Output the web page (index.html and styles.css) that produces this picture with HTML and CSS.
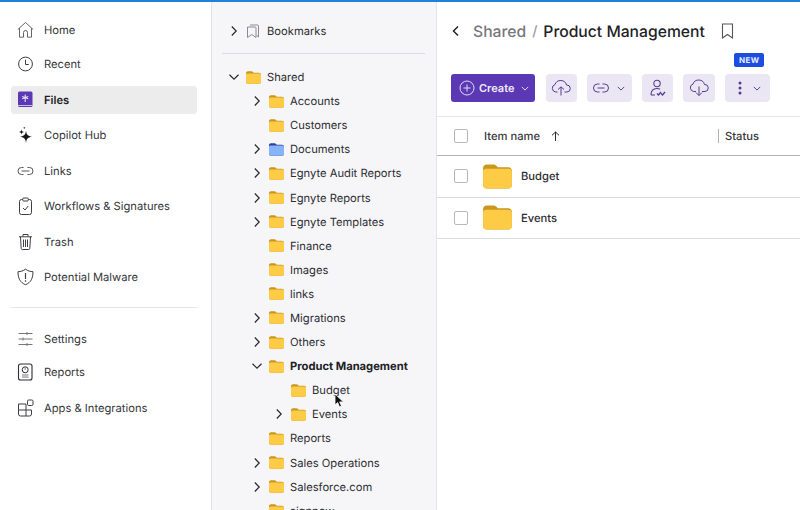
FILE: index.html
```html
<!DOCTYPE html>
<html lang="en">
<head>
  <meta charset="UTF-8">
  <title>Product Management</title>
  <link rel="stylesheet" href="styles.css">
</head>
<body>
  <svg class="defs" width="0" height="0">
    <symbol id="folder" viewBox="0 0 15 13">
      <path d="M0 2.200C0 1 .8.200 2 .200h3.400c.6 0 1 .2 1.400.6l.9.9h5.300c1.200 0 2 .8 2 2v7.100c0 1.200-.8 2-2 2H2c-1.200 0-2-.8-2-2z" fill="#c9971c"/>
      <path d="M0 4c0-1 .8-1.500 1.600-1.500h11.600c1 0 1.800.6 1.800 1.600v6.700c0 1.200-.8 2-2 2H2c-1.200 0-2-.8-2-2z" fill="#fdcb45"/>
    </symbol>
    <symbol id="folder-blue" viewBox="0 0 15 13">
      <path d="M0 2.200C0 1 .8.200 2 .200h3.400c.6 0 1 .2 1.400.6l.9.9h5.300c1.200 0 2 .8 2 2v7.100c0 1.200-.8 2-2 2H2c-1.200 0-2-.8-2-2z" fill="#2f3f9e"/>
      <path d="M0 4c0-1 .8-1.500 1.600-1.500h11.600c1 0 1.800.6 1.800 1.600v6.700c0 1.200-.8 2-2 2H2c-1.200 0-2-.8-2-2z" fill="#86b4f8"/>
    </symbol>
    <symbol id="chev-right" viewBox="0 0 10 12">
      <path d="M2.800 1.500 7.200 6l-4.400 4.500" fill="none" stroke="#2b2b2e" stroke-width="1.200"/>
    </symbol>
    <symbol id="chev-down" viewBox="0 0 12 10">
      <path d="M1.500 2.800 6 7.200l4.500-4.400" fill="none" stroke="#2b2b2e" stroke-width="1.200"/>
    </symbol>
    <symbol id="caret" viewBox="0 0 10 6">
      <path d="M1 1l4 4 4-4" fill="none" stroke="currentColor" stroke-width="1.200"/>
    </symbol>
  </svg>

  <div class="topline"></div>
  <div class="app">

    <!-- left nav -->
    <nav class="sidebar">
      <a class="nav-item first">
        <svg class="nav-icon" viewBox="0 0 18 18"><path d="M.8 8.500 8.500 1.500l7.700 7M2.500 7.200v9h4v-4.700a2 2 0 0 1 4 0v4.700h4v-9" fill="none" stroke="#55555c" stroke-width=".9"/></svg>
        Home
      </a>
      <a class="nav-item second">
        <svg class="nav-icon" viewBox="0 0 18 18"><circle cx="8.500" cy="9" r="6.900" fill="none" stroke="#3f3f45" stroke-width="1"/><path d="M8.500 4.800V9.500h3.300" fill="none" stroke="#3f3f45" stroke-width="1"/></svg>
        Recent
      </a>
      <a class="nav-item active">
        <svg class="nav-icon" viewBox="0 0 18 18"><rect x="1" y="0.500" width="14.500" height="15.500" rx="1.500" fill="#5b38b4"/><rect x="1" y="14" width="14.500" height="1" fill="#c9bdea"/><path d="M8.200 3.500v7.500M5.200 5.500l6 2.200M11.200 5.500l-6 2.200" stroke="#e6dff7" stroke-width="1.100"/></svg>
        Files
      </a>
      <a class="nav-item">
        <svg class="nav-icon" viewBox="0 0 18 18"><path d="M9 4.500c.5 4.200 1.800 5.600 6 6.200-4.200.6-5.500 2-6 6.300-.5-4.300-1.800-5.700-6-6.300 4.200-.6 5.500-2 6-6.200zM4.500 3.200c.2 2 .8 2.600 2.800 2.800-2 .2-2.600.8-2.800 2.800-.2-2-.8-2.600-2.800-2.800 2-.2 2.600-.8 2.800-2.800zM7.300.5c.1 1 .4 1.300 1.400 1.400-1 .1-1.300.4-1.400 1.400-.1-1-.4-1.300-1.400-1.400 1-.1 1.300-.4 1.400-1.400z" fill="#16161a"/></svg>
        Copilot Hub
      </a>
      <a class="nav-item">
        <svg class="nav-icon" viewBox="0 0 18 18"><path d="M6.500 5.500H4.500a3.500 3.500 0 0 0 0 7h2M10.500 5.500h2a3.500 3.500 0 0 1 0 7h-2M4.500 9h8" fill="none" stroke="#55555c" stroke-width="1"/></svg>
        Links
      </a>
      <a class="nav-item">
        <svg class="nav-icon" viewBox="0 0 18 18"><rect x="2.500" y="2.500" width="12" height="15" rx="2" fill="none" stroke="#3f3f45" stroke-width="1"/><rect x="5.700" y="1" width="5.600" height="3" rx="1" fill="#fff" stroke="#3f3f45" stroke-width="1"/><path d="m6 11 2 2 3.200-4" fill="none" stroke="#3f3f45" stroke-width="1"/></svg>
        Workflows &amp; Signatures
      </a>
      <a class="nav-item">
        <svg class="nav-icon" viewBox="0 0 18 18"><path d="M2 3.800h13M6 3.500V1.500h5v2M3.500 3.800l.7 11.700c0 .6.500 1 1 1h6.600c.5 0 1-.4 1-1l.7-11.700M6.500 6.500v7.500M8.500 6.500v7.500M10.500 6.500v7.500" fill="none" stroke="#3f3f45" stroke-width="1"/></svg>
        Trash
      </a>
      <a class="nav-item">
        <svg class="nav-icon" viewBox="0 0 18 18"><path d="M8.500 1.200c2.300 1.700 4.700 2.400 7.500 2.500 0 6.500-2 10.800-7.500 13C3 14.500 1 10.200 1 3.700c2.800-.1 5.200-.8 7.500-2.500z" fill="none" stroke="#3f3f45" stroke-width="1"/><path d="M8.500 5v6M8.500 12.300v1.400" stroke="#3f3f45" stroke-width="1.200"/></svg>
        Potential Malware
      </a>

      <div class="nav-divider"></div>

      <a class="nav-item settings">
        <svg class="nav-icon" viewBox="0 0 18 18"><path d="M1.500 3.500h14M1.500 9h14M1.500 14.500h14" stroke="#77777c" stroke-width="1"/><path d="M10 2v3M6 7.500v3M10 13v3" stroke="#77777c" stroke-width="1"/></svg>
        Settings
      </a>
      <a class="nav-item reports">
        <svg class="nav-icon" viewBox="0 0 18 18"><rect x="1.500" y="1" width="13.500" height="16" rx="2" fill="none" stroke="#2f2f34" stroke-width="1.100"/><circle cx="8.200" cy="6.800" r="3" fill="none" stroke="#2f2f34" stroke-width="1"/><path d="M8.200 6.800V4.300M5 12h6.500M5 14h6.500" stroke="#77777c" stroke-width="1"/></svg>
        Reports
      </a>
      <a class="nav-item apps">
        <svg class="nav-icon" viewBox="0 0 18 18"><path d="M1.500 5h7.500v12H3.500a2 2 0 0 1-2-2zM1.500 11h7.500M9 11h5.500v4a2 2 0 0 1-2 2H9" fill="none" stroke="#3f3f45" stroke-width="1"/><rect x="10.500" y="1" width="5.500" height="5.500" rx="1.200" fill="none" stroke="#3f3f45" stroke-width="1"/></svg>
        Apps &amp; Integrations
      </a>
    </nav>

    <!-- folder tree -->
    <aside class="tree">
      <div class="bookmarks">
        <svg class="chev"><use href="#chev-right"/></svg>
        <svg class="bm-icon" viewBox="0 0 14 14"><path d="M4 1h7.500c.6 0 1 .4 1 1v11l-2-1.600" fill="none" stroke="#8a8a90" stroke-width="1"/><path d="M1.500 3h7.500c.6 0 1 .4 1 1v9.500L5.800 10.500 1.500 13.500z" fill="none" stroke="#8a8a90" stroke-width="1"/></svg>
        <span>Bookmarks</span>
      </div>
      <div class="tree-divider"></div>
      <ul class="tree-list">
        <li class="row lvl0"><svg class="chev down"><use href="#chev-down"/></svg><svg class="fld"><use href="#folder"/></svg>Shared</li>
        <li class="row lvl1"><svg class="chev"><use href="#chev-right"/></svg><svg class="fld"><use href="#folder"/></svg>Accounts</li>
        <li class="row lvl1"><span class="chev"></span><svg class="fld"><use href="#folder"/></svg>Customers</li>
        <li class="row lvl1"><svg class="chev"><use href="#chev-right"/></svg><svg class="fld"><use href="#folder-blue"/></svg>Documents</li>
        <li class="row lvl1"><svg class="chev"><use href="#chev-right"/></svg><svg class="fld"><use href="#folder"/></svg>Egnyte Audit Reports</li>
        <li class="row lvl1"><svg class="chev"><use href="#chev-right"/></svg><svg class="fld"><use href="#folder"/></svg>Egnyte Reports</li>
        <li class="row lvl1"><svg class="chev"><use href="#chev-right"/></svg><svg class="fld"><use href="#folder"/></svg>Egnyte Templates</li>
        <li class="row lvl1"><span class="chev"></span><svg class="fld"><use href="#folder"/></svg>Finance</li>
        <li class="row lvl1"><span class="chev"></span><svg class="fld"><use href="#folder"/></svg>Images</li>
        <li class="row lvl1"><span class="chev"></span><svg class="fld"><use href="#folder"/></svg>links</li>
        <li class="row lvl1"><svg class="chev"><use href="#chev-right"/></svg><svg class="fld"><use href="#folder"/></svg>Migrations</li>
        <li class="row lvl1"><svg class="chev"><use href="#chev-right"/></svg><svg class="fld"><use href="#folder"/></svg>Others</li>
        <li class="row lvl1 current"><svg class="chev down"><use href="#chev-down"/></svg><svg class="fld"><use href="#folder"/></svg>Product Management</li>
        <li class="row lvl2"><span class="chev"></span><svg class="fld"><use href="#folder"/></svg>Budget</li>
        <li class="row lvl2"><svg class="chev"><use href="#chev-right"/></svg><svg class="fld"><use href="#folder"/></svg>Events</li>
        <li class="row lvl1"><span class="chev"></span><svg class="fld"><use href="#folder"/></svg>Reports</li>
        <li class="row lvl1"><svg class="chev"><use href="#chev-right"/></svg><svg class="fld"><use href="#folder"/></svg>Sales Operations</li>
        <li class="row lvl1"><svg class="chev"><use href="#chev-right"/></svg><svg class="fld"><use href="#folder"/></svg>Salesforce.com</li>
        <li class="row lvl1"><span class="chev"></span><svg class="fld"><use href="#folder"/></svg>signnow</li>
      </ul>
    </aside>

    <!-- main -->
    <main class="main">
      <div class="crumbs">
        <svg class="back" viewBox="0 0 10 12"><path d="M7 1.500 2.500 6 7 10.500" fill="none" stroke="#222" stroke-width="1.500"/></svg>
        <span class="crumb-parent">Shared</span>
        <span class="crumb-sep">/</span>
        <span class="crumb-current">Product Management</span>
        <svg class="bookmark" viewBox="0 0 13 16"><path d="M1.500 1h10v14L6.500 11.500 1.500 15z" fill="none" stroke="#55555c" stroke-width="1.100"/></svg>
      </div>

      <div class="toolbar">
        <button class="btn-create">
          <svg width="16" height="16" viewBox="0 0 16 16"><circle cx="8" cy="8" r="7" fill="none" stroke="#e4dcf6" stroke-width="1"/><path d="M8 4.500v7M4.500 8h7" stroke="#e4dcf6" stroke-width="1"/></svg>
          Create
          <svg class="caret" width="8" height="5"><use href="#caret"/></svg>
        </button>
        <button class="btn-tool">
          <svg width="20" height="16" viewBox="0 0 20 16"><path d="M6.500 12H4.800A3.800 3.800 0 0 1 4 4.600 6 6 0 0 1 15.500 5a3.500 3.500 0 0 1 .5 7h-2.500" fill="none" stroke="#4f3f8f" stroke-width="1"/><path d="M10 15.500V7M7 9.500 10 6.800l3 2.700" fill="none" stroke="#4f3f8f" stroke-width="1"/></svg>
        </button>
        <button class="btn-tool wide">
          <svg width="16" height="10" viewBox="0 0 16 10"><path d="M6.500 1H4.500a4 4 0 0 0 0 8h2M9.500 1h2a4 4 0 0 1 0 8h-2M4.500 5h7" fill="none" stroke="#4f3f8f" stroke-width="1"/></svg>
          <svg class="caret" width="8" height="5"><use href="#caret"/></svg>
        </button>
        <button class="btn-tool">
          <svg width="16" height="18" viewBox="0 0 16 18"><circle cx="7" cy="4.500" r="3.200" fill="none" stroke="#4f3f8f" stroke-width="1.100"/><path d="M1 16c0-4 2-6.500 6-6.500 1.300 0 2.300.2 3 .7M1 16h4" fill="none" stroke="#4f3f8f" stroke-width="1.100"/><path d="m7 14.500 1.500 1.500 2.500-3M11 14.500l1.500 1.500 2.500-3" fill="none" stroke="#4f3f8f" stroke-width="1.400"/></svg>
        </button>
        <button class="btn-tool cloud">
          <svg width="20" height="18" viewBox="0 0 20 18"><path d="M7 12.500H4.800A3.800 3.800 0 0 1 4 5.100 6 6 0 0 1 15.500 5.500a3.500 3.500 0 0 1 .5 7h-3" fill="none" stroke="#4f3f8f" stroke-width="1"/><path d="M10 7.500V16.500M7 13.500l3 3 3-3" fill="none" stroke="#4f3f8f" stroke-width="1"/></svg>
        </button>
        <div class="more-wrap">
          <span class="badge">NEW</span>
          <button class="btn-tool more">
            <svg width="4" height="14" viewBox="0 0 4 14"><circle cx="2" cy="2" r="1.500" fill="#4f3f8f"/><circle cx="2" cy="7" r="1.500" fill="#4f3f8f"/><circle cx="2" cy="12" r="1.500" fill="#4f3f8f"/></svg>
            <svg class="caret" width="8" height="5"><use href="#caret"/></svg>
          </button>
        </div>
      </div>

      <div class="list-head">
        <span class="check"></span>
        <span class="col-name">Item name</span>
        <svg class="sort" width="9" height="10" viewBox="0 0 9 10"><path d="M4.500 10V1M1 4.300 4.500 1 8 4.300" fill="none" stroke="#2b2b2e" stroke-width="1"/></svg>
        <span class="col-status">Status</span>
      </div>
      <div class="list-row">
        <span class="check"></span>
        <svg class="row-folder"><use href="#folder"/></svg>
        <span>Budget</span>
      </div>
      <div class="list-row">
        <span class="check"></span>
        <svg class="row-folder"><use href="#folder"/></svg>
        <span>Events</span>
      </div>
    </main>
  </div>

  <!-- mouse pointer -->
  <svg class="cursor" width="12" height="16" viewBox="0 0 12 16"><path d="M1 1v11l2.700-2.400 1.800 4.400 2-.9-1.800-4.200H9.500z" fill="#111" stroke="#fff" stroke-width=".8"/></svg>
</body>
</html>
```

FILE: styles.css
```css
* { box-sizing: border-box; }
html, body { margin: 0; height: 100%; overflow: hidden; }
body { font-family: Inter, "Liberation Sans", sans-serif; font-size: 11.2px; color: #2e2e33; background: #fff; text-rendering: geometricPrecision; }
.defs { position: absolute; }

.topline { height: 2px; background: #1f80e0; }
.app { display: flex; height: 508px; }

/* left nav */
.sidebar { width: 212px; flex: none; padding: 14px 14px 0 11px; border-right: 1px solid #e2e2e6; }
.nav-item { display: flex; align-items: center; gap: 9px; height: 28px; padding-left: 6px; margin-top: 7.5px; border-radius: 3px; color: #37373c; }
.nav-item.first { margin-top: 0; }
.nav-item.second { margin-top: 6px; }
.nav-item.active { background: #ececec; font-weight: 600; color: #1f1f23; }
.nav-icon { width: 18px; height: 18px; flex: none; }
.nav-divider { height: 1px; background: #e4e4e6; margin: 16px 0 17px; }
.nav-item.settings { margin-top: 0; }
.nav-item.reports { margin-top: 5px; }
.nav-item.apps { margin-top: 8px; }

/* tree */
.tree { width: 225px; flex: none; background: #f6f6f9; border-right: 1px solid #e4e4e8; overflow: hidden; padding-top: 17px; }
.bookmarks { display: flex; align-items: center; height: 24px; padding-left: 17px; }
.bm-icon { width: 14px; height: 14px; margin: 0 7px 0 7px; }
.tree-divider { height: 1px; background: #dcdce0; margin: 10px 11px 11px 10px; }
.tree-list { list-style: none; margin: 0; padding: 0; }
.row { display: flex; align-items: center; height: 24.1px; white-space: nowrap; }
.lvl0 { padding-left: 17px; }
.lvl1 { padding-left: 40px; }
.lvl2 { padding-left: 62px; }
.current { font-weight: 700; color: #222226; }
.chev { width: 10px; height: 12px; flex: none; display: block; }
.chev.down { width: 12px; height: 10px; margin-left: -1px; margin-right: -1px; }
.fld { width: 15px; height: 13px; flex: none; margin: 0 6px 0 7px; }

/* main */
.main { flex: 1; min-width: 0; overflow: hidden; }
.crumbs { display: flex; align-items: center; height: 38px; margin-top: 10px; padding-left: 14px; font-size: 15.7px; font-weight: 500; }
.back { width: 10px; height: 12px; margin-right: 12px; }
.crumb-parent { color: #77777c; }
.crumb-sep { color: #9a9a9f; margin: 0 6px 0 6px; font-size: 14px; }
.crumb-current { color: #222226; }
.bookmark { width: 13px; height: 16px; margin-left: 16px; }

.toolbar { display: flex; gap: 10.3px; margin: 24px 0 0 14px; height: 28px; }
button { font-family: inherit; text-rendering: inherit; border: 0; padding: 0; }
.btn-create { display: flex; align-items: center; width: 84.3px; height: 28px; padding-left: 8px; gap: 4px; background: #5b38b4; border-radius: 3px; color: #f0ebfb; font-size: 11px; font-weight: 600; }
.btn-create .caret { margin-left: 3px; color: #e4dcf6; }
.btn-tool { display: flex; align-items: center; justify-content: center; gap: 8px; width: 31px; height: 28px; background: #ebe6f4; border-radius: 4px; color: #4f3f8f; }
.btn-tool.wide { width: 45px; }
.btn-tool.cloud { width: 31.5px; }
.btn-tool.more { width: 45px; gap: 11px; padding-left: 3px; }
.more-wrap { position: relative; }
.badge { position: absolute; left: 9px; top: -21px; width: 30px; height: 14px; border-radius: 2px; background: #1d4ee0; color: #e8edff; font-size: 8px; font-weight: 700; letter-spacing: .4px; line-height: 14px; text-align: center; }

.list-head { display: flex; align-items: center; height: 40px; margin-top: 14px; border-top: 1px solid #e6e6e8; border-bottom: 1px solid #b4b4b8; padding-left: 17px; font-weight: 500; color: #37373c; }
.check { width: 14px; height: 14px; flex: none; border: 1px solid #b9b9bd; border-radius: 2px; background: #fff; }
.col-name { margin-left: 16px; }
.sort { margin-left: 11px; }
.col-status { margin-left: auto; width: 82px; border-left: 1px solid #b4b4b8; padding-left: 6px; line-height: 14px; }

.list-row { display: flex; align-items: center; height: 41.5px; padding-left: 17px; border-bottom: 1px solid #dcdcdf; font-weight: 500; color: #2e2e33; }
.row-folder { width: 29px; height: 25px; margin: 0 9px 0 15px; flex: none; }

/* sits over the tree */
.cursor { position: absolute; left: 334px; top: 393px; }
```
